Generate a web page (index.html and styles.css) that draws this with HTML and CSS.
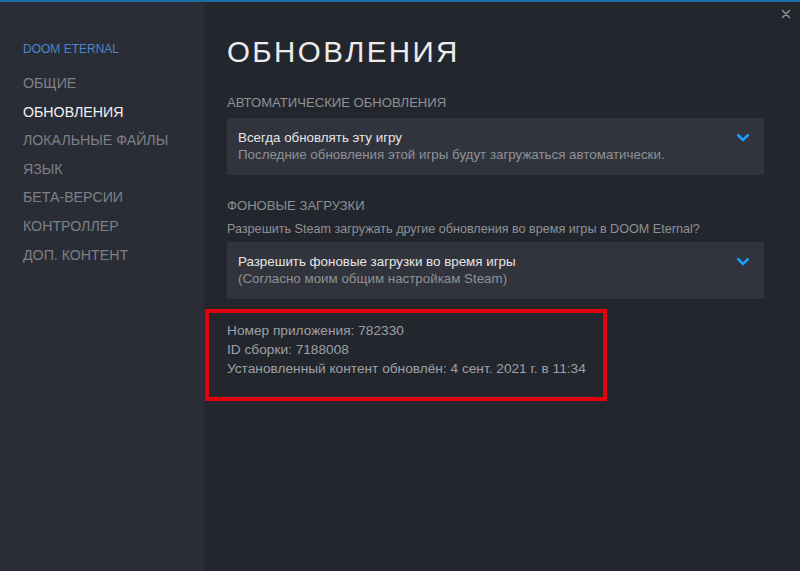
FILE: index.html
```html
<!DOCTYPE html>
<html lang="ru">
<head>
<meta charset="utf-8">
<title>Свойства — DOOM Eternal</title>
<link rel="stylesheet" href="styles.css">
</head>
<body>
<div class="window">
  <aside class="sidebar">
    <div class="game-name">DOOM ETERNAL</div>
    <nav class="nav">
      <div class="nav-item">ОБЩИЕ</div>
      <div class="nav-item active">ОБНОВЛЕНИЯ</div>
      <div class="nav-item">ЛОКАЛЬНЫЕ ФАЙЛЫ</div>
      <div class="nav-item">ЯЗЫК</div>
      <div class="nav-item">БЕТА-ВЕРСИИ</div>
      <div class="nav-item">КОНТРОЛЛЕР</div>
      <div class="nav-item">ДОП. КОНТЕНТ</div>
    </nav>
  </aside>
  <main class="main">
    <button class="close" aria-label="Закрыть">
      <svg width="10" height="10" viewBox="0 0 10 10"><path d="M1.5 1.5L8.5 8.5M8.5 1.5L1.5 8.5" stroke="#8a8c90" stroke-width="1.6" fill="none" stroke-linecap="round"/></svg>
    </button>
    <h1 class="title">ОБНОВЛЕНИЯ</h1>

    <div class="section-label">АВТОМАТИЧЕСКИЕ ОБНОВЛЕНИЯ</div>
    <div class="dropdown">
      <div class="dd-text">
        <div class="dd-main">Всегда обновлять эту игру</div>
        <div class="dd-sub">Последние обновления этой игры будут загружаться автоматически.</div>
      </div>
      <svg class="chevron" width="14" height="9" viewBox="0 0 14 9"><path d="M1.5 1.5L7 7L12.5 1.5" stroke="#1a9fff" stroke-width="2.6" fill="none"/></svg>
    </div>

    <div class="section-label second">ФОНОВЫЕ ЗАГРУЗКИ</div>
    <div class="section-desc">Разрешить Steam загружать другие обновления во время игры в DOOM Eternal?</div>
    <div class="dropdown tight">
      <div class="dd-text">
        <div class="dd-main">Разрешить фоновые загрузки во время игры</div>
        <div class="dd-sub">(Согласно моим общим настройкам Steam)</div>
      </div>
      <svg class="chevron" width="14" height="9" viewBox="0 0 14 9"><path d="M1.5 1.5L7 7L12.5 1.5" stroke="#1a9fff" stroke-width="2.6" fill="none"/></svg>
    </div>

    <div class="info">
      <div class="highlight"></div>
      <div class="info-line">Номер приложения: 782330</div>
      <div class="info-line">ID сборки: 7188008</div>
      <div class="info-line">Установленный контент обновлён: 4 сент. 2021 г. в 11:34</div>
    </div>
  </main>
</div>
</body>
</html>
```

FILE: styles.css
```css
* {
  box-sizing: border-box;
}

html, body {
  margin: 0;
  padding: 0;
  height: 100%;
  background: #23262d;
}

body {
  font-family: "Liberation Sans", Arial, sans-serif;
  color: #a3a6ab;
}

.window {
  display: flex;
  height: 571px;
  border-top: 2px solid #1c6ca8;
}

/* left navigation column */
.sidebar {
  width: 204px;
  flex: none;
  background: #2a2d35;
  padding: 40px 0 0 23px;
}

.game-name {
  font-size: 12px;
  line-height: 14px;
  color: #4b87c9;
  margin-bottom: 13px;
}

.nav-item {
  font-size: 14.2px;
  line-height: 28.6px;
  color: #7d8087;
  white-space: nowrap;
}

.nav-item.active {
  color: #f2f2f2;
}

/* content area */
.main {
  position: relative;
  flex: 1;
  padding: 32px 36px 0 23px;
}

.close {
  position: absolute;
  top: 4px;
  right: 8px;
  width: 12px;
  height: 12px;
  padding: 1px;
  border: 0;
  background: none;
}

.title {
  margin: 0;
  font-weight: normal;
  font-size: 29.5px;
  line-height: 36px;
  letter-spacing: 2.4px;
  color: #ececec;
}

.section-label {
  margin-top: 24px;
  font-size: 13.1px;
  line-height: 18px;
  color: #8e9197;
}

.section-label.second {
  margin-top: 22px;
}

.section-desc {
  margin-top: 6px;
  font-size: 12.6px;
  line-height: 16px;
  color: #8e9197;
}

.dropdown {
  margin-top: 6px;
  display: flex;
  align-items: flex-start;
  justify-content: space-between;
  height: 57px;
  padding: 11px 14px 0 11px;
  background: #31343c;
}

.dropdown.tight {
  margin-top: 5px;
}

.dd-main {
  font-size: 13.35px;
  line-height: 17px;
  color: #e6e6e6;
}

.dd-sub {
  font-size: 13.35px;
  line-height: 17px;
  color: #8e9197;
}

.chevron {
  margin-top: 4px;
}

/* build info with the red frame drawn over it */
.info {
  position: relative;
  margin-top: 22px;
  font-size: 13.7px;
  line-height: 19px;
  color: #9da0a6;
}

.highlight {
  position: absolute;
  left: -22px;
  top: -12px;
  width: 402px;
  height: 92px;
  border: 4px solid #e3000f;
  box-shadow: 0 0 1px rgba(120, 0, 0, 0.8);
}
```
